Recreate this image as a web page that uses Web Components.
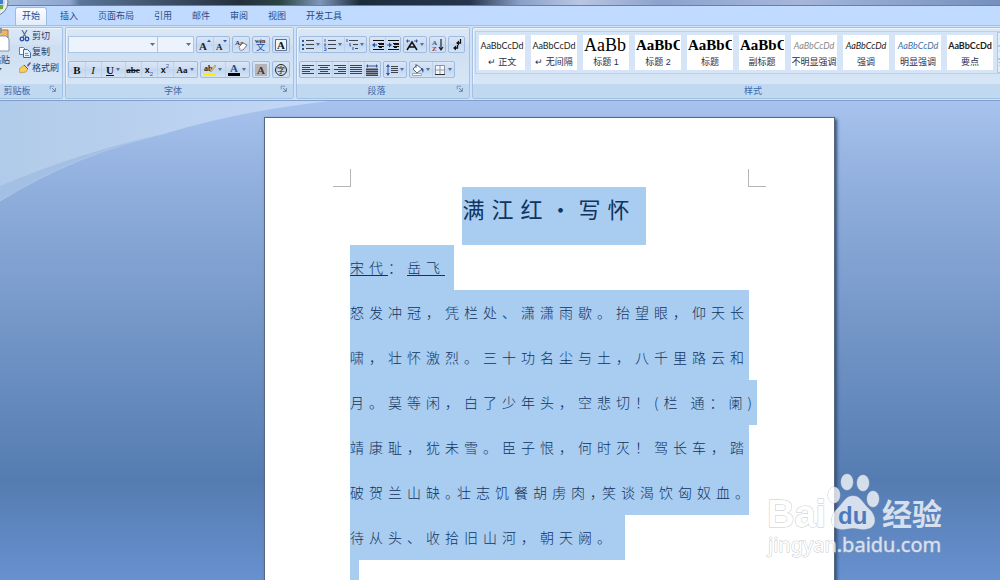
<!DOCTYPE html>
<html lang="zh-CN">
<head>
<meta charset="utf-8">
<title>满江红·写怀</title>
<style>
  * { box-sizing: border-box; }
  body {
    margin: 0;
    height: 100vh;
    display: flex;
    flex-direction: column;
    overflow: hidden;
    position: relative;
    font: 9px/12px "Liberation Sans", "Noto Sans CJK SC", sans-serif;
    color: #1d3c6e;
  }
  .row { display: flex; gap: 2px; }
  b.serif, i.serif { font-family: "Liberation Serif", serif; }
  .serif { font-size: 11px; color: #111; }
  sub, sup { font-size: 6px; line-height: 6px; color: #2a57a5; }
  .tiny { font-size: 9px; }
</style>
</head>
<body>
<window-title></window-title>
<ribbon-tabs>
  <ribbon-tab active>开始</ribbon-tab>
  <ribbon-tab>插入</ribbon-tab>
  <ribbon-tab>页面布局</ribbon-tab>
  <ribbon-tab>引用</ribbon-tab>
  <ribbon-tab>邮件</ribbon-tab>
  <ribbon-tab>审阅</ribbon-tab>
  <ribbon-tab>视图</ribbon-tab>
  <ribbon-tab>开发工具</ribbon-tab>
</ribbon-tabs>
<ribbon-bar>
  <ribbon-group class="clip" label="剪贴板">
    <clip-tools></clip-tools>
  </ribbon-group>
  <ribbon-group class="font" label="字体">
    <div class="row">
      <font-combos></font-combos>
      <tool-set>
        <tool-button icon="grow" label="增大字体"></tool-button>
        <tool-button icon="shrink" label="缩小字体"></tool-button>
      </tool-set>
      <tool-set><tool-button icon="clear" label="清除格式"></tool-button></tool-set>
      <tool-set><tool-button icon="pinyin" label="拼音指南"></tool-button></tool-set>
      <tool-set><tool-button icon="boxed" label="字符边框"></tool-button></tool-set>
    </div>
    <div class="row">
      <tool-set>
        <tool-button label="加粗"><b class="serif">B</b></tool-button>
        <tool-button label="倾斜"><i class="serif">I</i></tool-button>
        <tool-button menu label="下划线"><b class="serif"><u>U</u></b></tool-button>
        <tool-button label="删除线"><b class="serif tiny"><s>abc</s></b></tool-button>
        <tool-button label="下标"><b>x</b><sub>2</sub></tool-button>
        <tool-button label="上标"><b>x</b><sup>2</sup></tool-button>
        <tool-button menu label="更改大小写"><b class="serif tiny">Aa</b></tool-button>
      </tool-set>
      <tool-set>
        <tool-button menu icon="highlight" label="突出显示"></tool-button>
        <tool-button menu icon="color" label="字体颜色"></tool-button>
      </tool-set>
      <tool-set><tool-button icon="shade" label="字符底纹"></tool-button></tool-set>
      <tool-set><tool-button icon="circled" label="带圈字符"></tool-button></tool-set>
    </div>
  </ribbon-group>
  <ribbon-group class="para" label="段落">
    <div class="row">
      <tool-set>
        <tool-button menu icon="bullets" label="项目符号"></tool-button>
        <tool-button menu icon="numbers" label="编号"></tool-button>
        <tool-button menu icon="levels" label="多级列表"></tool-button>
      </tool-set>
      <tool-set>
        <tool-button icon="outdent" label="减少缩进量"></tool-button>
        <tool-button icon="indent" label="增加缩进量"></tool-button>
      </tool-set>
      <tool-set><tool-button menu icon="cjk" label="中文版式"></tool-button></tool-set>
      <tool-set><tool-button icon="sort" label="排序"></tool-button></tool-set>
      <tool-set><tool-button icon="marks" label="显示编辑标记"></tool-button></tool-set>
    </div>
    <div class="row">
      <tool-set class="roomy">
        <tool-button icon="left" label="左对齐"></tool-button>
        <tool-button icon="center" label="居中"></tool-button>
        <tool-button icon="right" label="右对齐"></tool-button>
        <tool-button icon="justify" label="两端对齐"></tool-button>
        <tool-button icon="spread" label="分散对齐"></tool-button>
      </tool-set>
      <tool-set><tool-button menu icon="spacing" label="行距"></tool-button></tool-set>
      <tool-set>
        <tool-button menu icon="fill" label="底纹"></tool-button>
        <tool-button menu icon="borders" label="边框"></tool-button>
      </tool-set>
    </div>
  </ribbon-group>
  <ribbon-group class="styles" label="样式">
    <style-gallery>
      <style-card name="↵ 正文"></style-card>
      <style-card name="↵ 无间隔"></style-card>
      <style-card name="标题 1" kind="h1" sample="AaBb"></style-card>
      <style-card name="标题 2" kind="h2" sample="AaBbC"></style-card>
      <style-card name="标题" kind="h2" sample="AaBbC"></style-card>
      <style-card name="副标题" kind="h2" sample="AaBbC"></style-card>
      <style-card name="不明显强调" kind="subtle"></style-card>
      <style-card name="强调" kind="em"></style-card>
      <style-card name="明显强调" kind="intense"></style-card>
      <style-card name="要点" kind="strong"></style-card>
    </style-gallery>
  </ribbon-group>
</ribbon-bar>
<doc-workspace>
  <doc-page>
    <text-line title>满江红·写怀</text-line>
    <text-line mark><u>宋代</u>：<u>岳飞</u></text-line>
    <text-line full>怒发冲冠，凭栏处、潇潇雨歇。抬望眼，仰天长</text-line>
    <text-line full>啸，壮怀激烈。三十功名尘与土，八千里路云和</text-line>
    <text-line>月。莫等闲，白了少年头，空悲切！(栏 通：阑)</text-line>
    <text-line full>靖康耻，犹未雪。臣子恨，何时灭！驾长车，踏</text-line>
    <text-line full tight>破贺兰山缺。壮志饥餐胡虏肉，笑谈渴饮匈奴血。</text-line>
    <text-line mark>待从头、收拾旧山河，朝天阙。</text-line>
    <text-line mark></text-line>
  </doc-page>
</doc-workspace>
<site-mark></site-mark>

<script>
const lines = (rows, color = '#3d4450') =>
  rows.map(([x1, x2, y]) => `<path d="M${x1} ${y}.5H${x2}" stroke="${color}"/>`).join('');
const stack = (ranges) => lines(ranges.map(([a, b], i) => [a, b, 1 + i * 2]));

// 12 x 12 toolbar glyphs
const ICONS = {
  grow: '<text x="0" y="11" font-size="11" font-weight="bold" fill="#222">A</text><path d="M8 3l2-2.500L12 3z" fill="#2a57a5"/>',
  shrink: '<text x="1" y="11" font-size="9" font-weight="bold" fill="#222">A</text><path d="M8 1h4l-2 2.500z" fill="#2a57a5"/>',
  clear: '<text x="0" y="6" font-size="7" font-weight="bold" fill="#333">Aa</text><path d="M4 8l4-4 4 2-4 5H5z" fill="#fff" stroke="#6b7690"/><path d="M4 8l3 2 1 1H5z" fill="#e3c9d4"/>',
  pinyin: '<text x="0" y="4" font-size="6" font-weight="bold" fill="#222">wén</text><text x="1" y="11" font-size="9" fill="#214fa8">文</text>',
  boxed: '<path d="M.5.500h11v11H.5z" fill="#eef4fc" stroke="#5c6f8c"/><text x="2" y="10" font-size="11" font-weight="bold" fill="#111">A</text>',
  highlight: '<text x="0" y="7" font-size="8" font-weight="bold" fill="#222">ab</text><path d="M6 7l5-6 1 1-5 6z" fill="#f3cf7b" stroke="#8d7137" stroke-width=".5"/><path d="M0 9h12v3H0z" fill="#ffef00"/>',
  color: '<text x="2" y="8" font-size="11" font-weight="bold" fill="#264c91">A</text><path d="M0 9h12v3H0z" fill="#000"/>',
  shade: '<path d="M0 0h12v12H0z" fill="#b5b5b8"/><text x="2" y="10" font-size="11" font-weight="bold" fill="#4d2e2a">A</text>',
  circled: '<circle cx="6" cy="6" r="5.500" fill="none" stroke="#222"/><text x="2" y="9" font-size="8" fill="#111">字</text>',
  bullets: '<path d="M0 1h2v2H0zM0 5h2v2H0zM0 9h2v2H0z" fill="#2a57a5"/>' + lines([[4, 12, 1], [4, 12, 5], [4, 12, 9]]),
  numbers: '<path d="M1 0v3M0 5h2l-1.500 2H2M0 9h2v2.500H0" fill="none" stroke="#2a57a5" stroke-width=".8"/>' + lines([[4, 12, 1], [4, 12, 5], [4, 12, 9]]),
  levels: '<path d="M1 0v3M4 4v3h1M7 8v3" fill="none" stroke="#2a57a5"/>' + lines([[3, 12, 1], [7, 12, 5], [9, 12, 9]]),
  outdent: lines([[1, 12, 1], [6, 12, 4], [6, 12, 7], [1, 12, 10]], '#111') + '<path d="M7 4h5v2H7zM7 7h3v2H7z" fill="#111"/><path d="M0 6l3-2.500v2h2v1H3v2z" fill="#2a57a5"/>',
  indent: lines([[1, 12, 1], [6, 12, 4], [6, 12, 7], [1, 12, 10]], '#111') + '<path d="M7 4h5v2H7zM7 7h3v2H7z" fill="#111"/><path d="M5 6L2 3.500v2H0v1h2v2z" fill="#2a57a5"/>',
  cjk: '<path d="M1 11L6 3l5 8M3.500 8h5" fill="none" stroke="#111" stroke-width="1.500"/><path d="M0 2l2-2v4zM12 2l-2-2v4z" fill="#2a57a5"/><path d="M1 2h3M8 2h3" stroke="#2a57a5"/>',
  sort: '<text x="0" y="6" font-size="7" font-weight="bold" fill="#2a57a5">A</text><text x="0" y="12" font-size="7" font-weight="bold" fill="#a03434">Z</text><path d="M9 0v10M7 8l2 3 2-3" fill="none" stroke="#222" stroke-width="1.200"/>',
  marks: '<path d="M9.500 0v4H7" fill="none" stroke="#111" stroke-width="1.300"/><path d="M8 1.500v5L5 4z" fill="#111"/><path d="M6.500 6v3H4" fill="none" stroke="#111" stroke-width="1.300"/><path d="M5 6.500v5L2 9z" fill="#111"/>',
  left: stack([[0, 12], [0, 8], [0, 12], [0, 8], [0, 12]]),
  center: stack([[0, 12], [2, 10], [0, 12], [2, 10], [0, 12]]),
  right: stack([[0, 12], [4, 12], [0, 12], [4, 12], [0, 12]]),
  justify: stack([[0, 12], [0, 12], [0, 12], [0, 12], [0, 12]]),
  spread: '<path d="M0 2l2-2v4zM12 2l-2-2v4z" fill="#2a57a5"/><path d="M2 2h8" stroke="#2a57a5"/><path d="M0 4h12v8H0z" fill="#8a919e"/>' + lines([[0, 12, 5], [0, 12, 7], [0, 12, 9], [0, 12, 11]]),
  spacing: '<path d="M2 0L0 3h4zM2 12L0 9h4z" fill="#2a57a5"/><path d="M2 3v6" stroke="#2a57a5"/>' + lines([[5, 12, 2], [5, 12, 4], [5, 12, 6], [5, 12, 8]]),
  fill: '<path d="M5 1l5 4-5 4-4-4z" fill="#fff" stroke="#55657e"/><path d="M4 4V0" stroke="#55657e"/><path d="M9 4c3 0 3 2 2 5-1-2-1-3-2-3z" fill="#2a57a5"/><path d="M.5 9.500h9v2h-9z" fill="#fff" stroke="#9aa7ba"/>',
  borders: '<path d="M1.500 1.500h9v9h-9zM6 1.500v9M1.500 6h9" fill="#f4f8fd" stroke="#8b97a9"/><path d="M1 10.500h10" stroke="#333"/>'
};
const svg = (body, size = 12) =>
  `<svg width="${size}" height="${size}" viewBox="0 0 12 12" font-family="Liberation Serif, Noto Sans CJK SC, serif" aria-hidden="true">${body}</svg>`;

function define(name, render) {
  customElements.define(name, class extends HTMLElement {
    connectedCallback() {
      if (this.shadowRoot) return;
      this.attachShadow({ mode: 'open' }).innerHTML =
        '<style>*{box-sizing:border-box}button,select{font:inherit;color:inherit;margin:0}</style>' + render(this);
    }
  });
}

define('window-title', () => `
  <style>
    :host { display: block; flex: none; height: 6px; border-bottom: 1px solid #6482ae;
      background: linear-gradient(90deg, #a9bfe0 0, #8ba5cf 7%, #5b7598 8%, #232f3d 24%, #2b4444 28%, #8097bb 32%, #1c2c3c 36%, #26354b 47%, #8aa0c8 52%, #b9c6e3 58%, #8da2cc 66%, #a5b6da 80%, #7590bd 100%); }
    svg { position: absolute; left: 0; top: 0; z-index: 1; }
  </style>
  <svg width="12" height="17" aria-hidden="true">
    <circle cx="-6" cy="2" r="14" fill="#e9eef6" stroke="#6f7f99"/>
    <circle cx="-6" cy="2" r="11" fill="#cbd6e8"/>
    <path d="M0 0h3v4H0z" fill="#3f7fd0"/><path d="M0 5h3v4H0z" fill="#6dab3c"/>
  </svg>`);

define('ribbon-tabs', () => `
  <style>
    :host { display: block; flex: none; height: 19px; padding-left: 12px; background: #c0dbff; }
    nav { display: flex; height: 100%; }
  </style>
  <nav><slot></slot></nav>`);

define('ribbon-tab', () => `
  <style>
    :host { display: block; padding-top: 1px; }
    button { height: 18px; padding: 0 10px 1px; border: 0; background: none; color: #1f4a8c; display: block; white-space: nowrap; }
    :host([active]) { padding: 1px 3px 0; }
    :host([active]) button { border: 1px solid #9dbbe2; border-bottom: 0; border-radius: 3px 3px 0 0;
      padding: 0 6px 2px; background: linear-gradient(#fbfdff, #e3edf9); }
  </style>
  <button type="button"><slot></slot></button>`);

define('ribbon-bar', () => `
  <style>
    :host { display: flex; flex: none; height: 76px; gap: 2px; padding: 1px 0 1px; overflow: hidden;
      background: #d0e2f6; border-top: 1px solid #9fc0e8; border-bottom: 1px solid #7f9fc8; }
    ::slotted(*) { flex: none; }
    ::slotted(.clip) { width: 79px; margin-left: -16px; }
    ::slotted(.font) { width: 229px; --btn: 16px; --btn-menu: 24px; }
    ::slotted(.para) { width: 174px; --btn: 15px; --btn-menu: 22px; }
    ::slotted(.styles) { width: 575px; --pad: 3px; }
  </style>
  <slot></slot>`);

define('ribbon-group', (el) => `
  <style>
    :host { display: flex; flex-direction: column; border: 1px solid #a3c1e4; border-radius: 2px;
      background: linear-gradient(#dce8f6 0, #d3e1f3 24%, #cddef1 25%, #dbe9f8 100%); box-shadow: inset 1px 1px #eaf3fd; }
    .body { flex: 1; display: flex; flex-direction: column; gap: 8px; padding: var(--pad, 8px) 2px 0; }
    footer { display: flex; height: 14px; align-items: center; background: #c1d8f1; color: #3c68a8; }
    footer span { flex: 1; text-align: center; }
    footer button { width: 13px; height: 12px; padding: 0; border: 0; background: none; display: flex; }
  </style>
  <div class="body"><slot></slot></div>
  <footer><span>${el.getAttribute('label')}</span>
    <button type="button" aria-label="${el.getAttribute('label')}设置">${svg('<path d="M1.500 6V1.500H7" fill="none" stroke="#6483ad"/><path d="M4 4l4 4M8.500 4v4.500H4" fill="none" stroke="#4a6a96"/>', 9)}</button>
  </footer>`);

define('clip-tools', () => `
  <style>
    :host { display: flex; margin-top: -8px; height: 52px; }
    button { border: 0; background: none; padding: 0; display: flex; align-items: center; white-space: nowrap; }
    .paste { width: 24px; flex-direction: column; gap: 2px; align-items: flex-end; padding-right: 1px; }
    .side { display: flex; flex-direction: column; padding-left: 8px; }
    .side button { gap: 1px; height: 16px; line-height: 12px; }
  </style>
  <button class="paste" type="button">
    <svg width="24" height="24" aria-hidden="true">
      <path d="M1 2h21v19H1z" fill="#e9b767" stroke="#a97a35"/><path d="M7 0h9v5H7z" fill="#8d96a5"/>
      <path d="M11 8h9l3 3v12H11z" fill="#fff" stroke="#8193b3"/>
    </svg>
    <span>粘贴</span>
    <svg width="20" height="4" aria-hidden="true"><path d="M7 0h5L9.500 3z" fill="#42628f"/></svg>
  </button>
  <div class="side">
    <button type="button">${svg('<path d="M3 0l4 7M8 0L4 7" stroke="#5a6f8f" stroke-width="1.200"/><circle cx="3" cy="9" r="1.800" fill="none" stroke="#1e4fa8" stroke-width="1.300"/><circle cx="8" cy="9" r="1.800" fill="none" stroke="#1e4fa8" stroke-width="1.300"/>')}剪切</button>
    <button type="button">${svg('<path d="M.5 1.500h4l2 2v5h-6z" fill="#fff" stroke="#5a7fb5"/><path d="M4.500 3.500h4l3 3v5h-7z" fill="#e9f1fc" stroke="#3f67a6"/><path d="M6 7.500h3M6 9.500h4" stroke="#6f93c8"/>')}复制</button>
    <button type="button">${svg('<path d="M8 3l3-3 1 1-3 4z" fill="#6b5a86"/><path d="M5 3l4 4-2 3-6 1-1-4z" fill="#f3cf60" stroke="#a48434" stroke-width=".6"/><path d="M5 3l4 4" stroke="#555"/>')}格式刷</button>
  </div>`);

define('font-combos', () => `
  <style>
    :host { display: flex; flex: none; width: 126px; height: 17px; }
    span { position: relative; flex: 1 1 0; min-width: 0; display: flex; }
    .family { flex: 0 0 90px; }
    select { width: 100%; height: 100%; appearance: none; border: 1px solid #abc5e6; border-radius: 0; background: #ecf3fc; padding: 0 2px; }
    span + span select { border-left: 0; }
    svg { position: absolute; right: 3px; top: 7px; pointer-events: none; }
  </style>
  <span class="family"><select aria-label="字体"><option></option></select><svg width="5" height="3"><path d="M0 0h5L2.500 3z" fill="#53719b"/></svg></span>
  <span><select aria-label="字号"><option></option></select><svg width="5" height="3"><path d="M0 0h5L2.500 3z" fill="#53719b"/></svg></span>`);

define('tool-set', () => `
  <style>
    :host { display: flex; flex: none; height: 17px; border: 1px solid #a0bbdf; border-radius: 2px;
      background: linear-gradient(#d9e6f6 0, #ccdcf1 45%, #c2d6ef 46%, #d3e3f6 100%); }
    :host(.roomy) { --btn: 16px; }
  </style>
  <slot></slot>`);

define('tool-button', (el) => {
  const menu = el.hasAttribute('menu');
  return `
  <style>
    :host { display: block; width: var(${menu ? '--btn-menu' : '--btn'}); }
    :host(:not(:first-child)) { box-shadow: inset 1px 0 #bfd2eb; }
    button { width: 100%; height: 15px; border: 0; padding: 0; background: none; line-height: 14px;
      display: flex; align-items: center; justify-content: center; gap: 2px; color: #111; }
    .glyph { display: flex; align-items: center; }
    svg { display: block; overflow: visible; }
    ::slotted(sub) { align-self: flex-end; }
    ::slotted(sup) { align-self: flex-start; }
  </style>
  <button type="button" aria-label="${el.getAttribute('label')}">
    <span class="glyph">${el.hasAttribute('icon') ? svg(ICONS[el.getAttribute('icon')]) : '<slot></slot>'}</span>
    ${menu ? '<svg width="4" height="3" aria-hidden="true"><path d="M0 0h4L2 3z" fill="#53719b"/></svg>' : ''}
  </button>`;
});

define('style-gallery', () => `
  <style>
    :host { display: flex; gap: 6px; width: 542px; height: 43px; padding: 3px 0 3px 3px; border: 1px solid #bdd0e9; background: #d5e4f6; }
    ::slotted(*) { flex: none; }
    .scroll { display: flex; flex-direction: column; width: 14px; margin: -3px 0 -3px -2px; flex: none; }
    .scroll button { flex: 1; padding: 0; border: 1px solid #b0c8e6; background: #e2ecf9; font-size: 6px; line-height: 8px; text-align: left; }
  </style>
  <slot></slot>
  <div class="scroll">
    <button type="button" aria-label="上一行">${svg('<path d="M2 8h8L6 3z" fill="#a9b4c4"/>', 8)}</button>
    <button type="button" aria-label="下一行">${svg('<path d="M2 4h8L6 9z" fill="#42628f"/>', 8)}</button>
    <button type="button" aria-label="其他">${svg('<path d="M2 2h8v1H2zM2 6h8l-4 5z" fill="#42628f"/>', 8)}</button>
  </div>`);

define('style-card', (el) => `
  <style>
    :host { display: block; width: 46px; height: 35px; }
    button { width: 100%; height: 100%; padding: 0 1px; border: 0; background: #fff; display: flex; flex-direction: column; align-items: stretch; }
    .sample { height: 21px; line-height: 21px; overflow: hidden; white-space: nowrap; text-align: center; color: #1c1c1c;
      font-family: Lato, sans-serif; font-size: 9px; }
    .name { line-height: 12px; text-align: center; white-space: nowrap; color: #26304f; margin: 0 -1px; }
    .h1, .h2 { font-family: "Liberation Serif", serif; font-weight: bold; font-size: 15px; color: #000; text-align: left; }
    .h1 { font-size: 18px; font-weight: normal; }
    .subtle, .em, .intense { font-style: italic; }
    .subtle { color: #8a8a8a; }
    .intense { color: #3f74a8; }
    .strong { font-weight: bold; }
  </style>
  <button type="button"><span class="sample ${el.getAttribute('kind') || ''}">${el.getAttribute('sample') || 'AaBbCcDd'}</span><span class="name">${el.getAttribute('name')}</span></button>`);

define('doc-workspace', () => `
  <style>
    :host { flex: 1; min-height: 0; display: flex; justify-content: center; align-items: flex-start; position: relative; overflow: hidden;
      padding: 16px 0 0 99px; background: linear-gradient(#a7c2ed 0, #8dacda 21%, #557cb1 79%, #6791cf 100%); }
    .swoosh { position: absolute; left: 0; top: 0; }
    ::slotted(*) { position: relative; flex: none; }
  </style>
  <svg class="swoosh" width="340" height="110" aria-hidden="true">
    <defs><linearGradient id="g" x2="1" y2="0"><stop offset="0" stop-color="#b0cbe9"/><stop offset="1" stop-color="#c4d7f6"/></linearGradient></defs>
    <path d="M0 100Q75 53 167 32L0 0z" fill="#a3bfe3"/>
    <path d="M0 100Q75 53 167 32" fill="none" stroke="#a9c9ec"/>
    <path d="M0 0H330Q240 10 167 32Q80 51 0 85z" fill="url(#g)"/>
  </svg>
  <slot></slot>`);

define('doc-page', () => `
  <style>
    :host { display: block; width: 571px; min-height: 800px; padding: 51px 85px 0; background: #fff;
      border: 1px solid #566780; box-shadow: 2px 2px 3px #34507c; }
    .crop { display: flex; justify-content: space-between; height: 18px; margin: 0 -17px; }
    .crop i { width: 18px; border: 1px solid #b5b5b5; border-top: 0; border-left: 0; }
    .crop i + i { border-right: 0; border-left: 1px solid #b5b5b5; }
  </style>
  <div class="crop"><i></i><i></i></div>
  <slot></slot>`);

define('text-line', () => `
  <style>
    :host { display: flex; height: 45px; line-height: 44px; font-family: "Noto Sans CJK SC", sans-serif; font-weight: 300;
      font-size: 14px; letter-spacing: 5px; color: #0f3460; }
    span { flex: none; height: 100%; background: #a9ccf1; white-space: nowrap; }
    :host([full]) span { width: 100%; }
    :host([mark]) span { padding-right: 9px; }
    :host([tight]) span { font-feature-settings: "halt"; }
    :host([title]) { height: 58px; line-height: 42px; font-size: 22px; letter-spacing: 7px; font-weight: 400; justify-content: center; }
    :host([title]) span { padding-right: 9px; margin-right: -9px; }
    ::slotted(u) { text-underline-offset: 2px; text-decoration-thickness: 1px; }
  </style>
  <span><slot></slot></span>`);

// watermark lying over the lower right corner
define('site-mark', () => `
  <style>
    :host { position: absolute; right: 52px; bottom: 16px; width: 184px; height: 94px; opacity: .75; pointer-events: none; }
    svg { display: block; overflow: visible; }
  </style>
  <svg width="184" height="94" fill="#fff" stroke="#b4b8c0" stroke-width="1" paint-order="stroke">
    <text x="3" y="57" font-family="Liberation Sans" font-weight="bold" font-size="38">Bai</text>
    <ellipse cx="70" cy="25" rx="6" ry="8"/><ellipse cx="83" cy="12" rx="6" ry="8"/>
    <ellipse cx="99" cy="13" rx="6" ry="8"/><ellipse cx="109" cy="29" rx="6" ry="8"/>
    <path d="M89 26c8 0 10 8 16 13 8 7 8 19-3 20-5 1-8-1-13-1s-8 2-13 1c-11-1-10-13-3-20 6-5 8-13 16-13z"/>
    <text x="74" y="54" font-family="Liberation Sans" font-weight="bold" font-size="24" fill="#4778bd" stroke="none">du</text>
    <text x="118" y="55" font-family="Noto Sans CJK SC" font-weight="bold" font-size="30" stroke="none">经验</text>
    <text x="4" y="82" font-family="Noto Sans" font-size="20" stroke-width="1">jingyan.baidu.com</text>
  </svg>`);
</script>
</body>
</html>
